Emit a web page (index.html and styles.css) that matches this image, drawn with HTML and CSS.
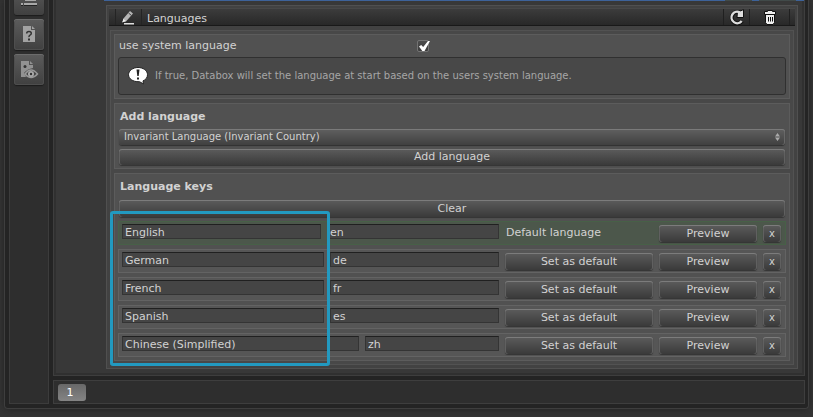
FILE: index.html
```html
<!DOCTYPE html>
<html lang="en">
<head>
<meta charset="utf-8">
<title>Databox languages</title>
<link rel="stylesheet" href="styles.css">
</head>
<body>
<div class="window">
  <nav class="sidebar" aria-label="Sections">
    <button class="tool clipped" type="button" aria-label="List"><svg width="30" height="15" viewBox="0 0 30 15"><g fill="#222"><path d="M7 4h2v2H7zM10 4h13v2H10z"/></g><g fill="#a8a8a8"><path d="M7 3h2v2H7zM10 3h13v2H10zM11 0h11v1H11z"/></g></svg></button>
    <button class="tool" type="button" aria-label="Help"><svg width="30" height="31" viewBox="0 0 30 31"><path fill="#a2a2a2" d="M9 7h8v4h4v12H9z"/><path fill="#a2a2a2" d="M18 7l3 3h-3z"/><path fill="none" stroke="#333" stroke-width="1.5" d="M12.700 14.500q0-2 2.300-2t2.300 1.800q0 1.200-1.300 1.800t-1 2"/><path fill="#333" d="M14 19.500h2v2h-2z"/></svg></button>
    <button class="tool" type="button" aria-label="View"><svg width="30" height="31" viewBox="0 0 30 31"><path fill="#929292" d="M7 7h8v4h4v3q-6 1-9 5l2 4H7z"/><path fill="#929292" d="M16 7l3 3h-3z"/><circle cx="11" cy="12.500" r="1.500" fill="#333"/><path fill="#444" stroke="#999" stroke-width="1.500" d="M11 20q6-8 12.500 0q-6.500 7-12.500 0z"/><circle cx="17" cy="20" r="3" fill="#aaa"/><circle cx="17" cy="20" r="1.200" fill="#333"/></svg></button>
  </nav>
  <main class="content">
    <div class="strip"><span></span><span></span></div>
    <section class="panel">
      <header class="bar">
        <span class="edit"><svg width="16" height="17" viewBox="0 0 16 17"><path fill="#b5b5b5" d="M3 10L10 2l3 2.500L6 12.500 3 13z"/><path stroke="#444" d="M8.500 4l3 2.500"/><path fill="#eee" d="M2 13.500l1.500-3.500L6 12z"/><path fill="#ddd" d="M4 14h10v1.500H4z"/></svg></span>
        <h1>Languages</h1>
        <button class="icon reload" type="button" aria-label="Reload"><svg width="18" height="18" viewBox="0 0 18 18"><path fill="none" stroke="#111" stroke-width="4" d="M12.500 4.800A5.700 5.700 0 1 0 14 13"/><path fill="#ddd" stroke="#111" d="M9.500 3h3l3-1.500v8H9z"/><path fill="none" stroke="#ddd" stroke-width="2.400" d="M12 4.500A5.700 5.700 0 1 0 13.700 13"/></svg></button>
        <button class="icon trash" type="button" aria-label="Delete"><svg width="14" height="17" viewBox="0 0 14 17"><path fill="#eee" stroke="#111" d="M4.500 1.500h5v1h3v3h-1v8l-1.500 2H4l-1.500-2v-8h-1v-3h3z"/><path stroke="#111" d="M2 5.500h10M5.500 8v4.500M7.500 8v4.500M9.500 8v4.500"/></svg></button>
        <span class="end"></span>
      </header>
      <div class="body">
        <section class="group">
          <div class="option"><label for="sys">use system language</label><input id="sys" type="checkbox" checked></div>
          <p class="info"><svg width="20" height="18" viewBox="0 0 20 18"><path fill="#fff" stroke="#222" d="M10 .5c5 0 9.500 3 9.500 7.200 0 3-1.800 5-4.500 6.200l.5 3-4-2.200H10c-5 0-9.500-3-9.500-7S5 .5 10 .5z"/><path fill="#222" d="M8.500 2.500h3l-.8 6.500H9.300zM9 10.500h2v2H9z"/></svg><span>If true, Databox will set the language at start based on the users system language.</span></p>
        </section>
        <section class="group">
          <h2><label for="lang">Add language</label></h2>
          <div class="select"><select id="lang"><option>Invariant Language (Invariant Country)</option></select><svg width="5" height="8" viewBox="0 0 5 8"><path fill="#aaa" d="M0 3.500L2.500 0 5 3.500zM0 4.500h5L2.500 8z"/></svg></div>
          <button class="btn wide" type="button">Add language</button>
        </section>
        <section class="group keys">
          <h2>Language keys</h2>
          <button class="btn wide" type="button">Clear</button>
          <div class="rows">
            <div class="row default"><input aria-label="Name" value="English"><input aria-label="Key" value="en"><span>Default language</span><button class="btn" type="button">Preview</button><button class="btn x" type="button">x</button></div>
            <div class="row"><input aria-label="Name" value="German"><input aria-label="Key" value="de"><button class="btn" type="button">Set as default</button><button class="btn" type="button">Preview</button><button class="btn x" type="button">x</button></div>
            <div class="row"><input aria-label="Name" value="French"><input aria-label="Key" value="fr"><button class="btn" type="button">Set as default</button><button class="btn" type="button">Preview</button><button class="btn x" type="button">x</button></div>
            <div class="row"><input aria-label="Name" value="Spanish"><input aria-label="Key" value="es"><button class="btn" type="button">Set as default</button><button class="btn" type="button">Preview</button><button class="btn x" type="button">x</button></div>
            <div class="row long"><input aria-label="Name" value="Chinese (Simplified)"><input aria-label="Key" value="zh"><button class="btn" type="button">Set as default</button><button class="btn" type="button">Preview</button><button class="btn x" type="button">x</button></div>
          </div>
          <div class="highlight"></div>
        </section>
      </div>
    </section>
  </main>
  <footer class="pages"><button type="button">1</button></footer>
</div>
</body>
</html>
```
FILE: styles.css
```css
* { box-sizing: border-box; }
body { margin: 0; background: #353535; color: #d2d2d2; font: 11px/14px "DejaVu Sans", sans-serif; }
button, input, select { font: inherit; color: inherit; margin: 0; padding: 0; }
h1, h2, p { margin: 0; font-size: 11px; }
svg { display: block; flex: none; }

.window { display: grid; grid-template-columns: 40px 1fr; gap: 4px; margin: 0 4px 8px; padding: 0 3px 4px 4px; border: 1px solid #3e3e3e; border-top: 0; border-radius: 0 0 4px 4px; background: #242424; box-shadow: 0 0 8px #222; }

.sidebar { grid-row: 1 / 3; display: flex; flex-direction: column; align-items: center; gap: 4px; border: 1px solid #3c3c3c; border-top: 0; background: #2e2e2e; }
.tool { width: 30px; height: 31px; border: 0; border-radius: 3px; background: linear-gradient(#5c5c5c, #404040); box-shadow: inset 0 1px #6c6c6c, inset 0 0 0 1px #4e4e4e, 0 1px 1px #1c1c1c; }
.tool.clipped { height: 15px; border-radius: 0 0 3px 3px; background: linear-gradient(#4e4e4e, #404040); box-shadow: 0 1px 1px #1c1c1c; }

.content { padding: 0 6px 6px 52px; border: 1px solid #3e3e3e; border-top: 0; background: #383838; box-shadow: inset 2px -2px #303030, inset -2px 0 #303030; }
.strip { display: flex; justify-content: flex-end; gap: 7px; height: 1px; margin: 0 -6px 4px -2px; padding-right: 8px; background: #3d6299; }
.strip span { width: 27px; background: #414a49; }
.strip span + span { width: 37px; }

.panel { padding: 2px 3px 3px; border: 1px solid #505050; background: #424242; }
.bar { display: flex; height: 18px; padding-left: 6px; margin: 0 -1px 4px; border-top: 1px solid #484848; border-bottom: 1px solid #191919; background: linear-gradient(#3c3c3c, #282828); }
.bar h1 { flex: 1; padding: 3px 5px 0; font-weight: normal; line-height: 14px; }
.edit { width: 27px; padding-left: 4px; border: solid #242424; border-width: 0 1px; }
.icon { display: flex; justify-content: center; align-items: center; border: 0; border-left: 1px solid #202020; background: none; }
.reload { width: 26px; }
.trash { width: 40px; }
.end { width: 6px; border-left: 1px solid #202020; }

.body { display: flex; flex-direction: column; gap: 4px; padding: 3px; border: 1px solid #525252; background: #484848; }
.group { position: relative; padding: 3px; border: 1px solid #5c5c5c; background: #515151; }
.option { display: grid; grid-template-columns: 298px 1fr; align-items: center; height: 16px; margin-bottom: 3px; padding-left: 1px; }
.option input { appearance: none; position: relative; width: 12px; height: 12px; border: 1px solid #747474; border-radius: 2px; background: linear-gradient(#4c4c4c, #3c3c3c); }
.option input:checked::after { content: ""; position: absolute; left: 1px; top: 0; width: 11px; height: 10px; clip-path: polygon(0 55%, 20% 40%, 38% 60%, 82% 0, 100% 0, 50% 100%, 30% 100%); background: #fff; }
.info { display: flex; align-items: center; gap: 7px; height: 38px; padding-left: 9px; border: 1px solid #303030; border-radius: 3px; background: #484848; color: #a6a6a6; font-size: 10px; }

h2 { height: 19px; padding-left: 2px; font-weight: bold; line-height: 20px; }
.select { position: relative; height: 16px; margin: 3px 1px 4px; }
select { appearance: none; display: block; width: 100%; height: 16px; padding: 0 5px; border: 0; border-radius: 3px; background: linear-gradient(#606060, #404040); box-shadow: inset 0 1px #7a7a7a, inset -1px 0 #686868, 0 1px 1px #303030; font-size: 10px; }
.select svg { position: absolute; right: 5px; top: 4px; }
.btn { display: block; height: 17px; border: 0; border-radius: 3px; background: linear-gradient(#5c5c5c, #3a3a3a); box-shadow: inset 0 1px #7c7c7c, inset 1px 0 #606060, inset -1px 0 #606060, 0 1px 1px #333; line-height: 16px; }
.wide { width: calc(100% - 2px); height: 16px; margin: 0 1px; }
h2 + .wide { height: 17px; margin-top: 4px; }
.rows { display: flex; flex-direction: column; gap: 4px; margin-top: 4px; }
.row { display: grid; grid-template-columns: 202px 1fr 148px 98px 18px; column-gap: 6px; height: 24px; padding: 2px 4px 3px 3px; border: 1px solid #636363; background: #565656; }
.row input { width: 100%; min-width: 0; height: 15px; padding: 1px 2px 0; border: 1px solid #343434; border-top-color: #202020; border-radius: 0; background: #454545; }
.row .btn { margin-top: 1px; }
.row .x { font-size: 10px; }
.row span { padding: 2px 1px; }
.default { grid-template-columns: 199px 1fr 148px 98px 18px; border-color: #476047; background: #4c574b; }
.long { grid-template-columns: 237px 1fr 148px 98px 18px; }
.highlight { position: absolute; left: -5px; top: 37px; bottom: -6px; width: 220px; border: 3px solid #2299c0; border-radius: 3px; pointer-events: none; }

.pages { padding: 3px 4px 2px; border: 1px solid #3e3e3e; background: #2e2e2e; }
.pages button { display: block; width: 28px; height: 17px; padding-right: 4px; border: 0; border-radius: 3px; background: linear-gradient(#686868, #848484); color: #fff; }
```
